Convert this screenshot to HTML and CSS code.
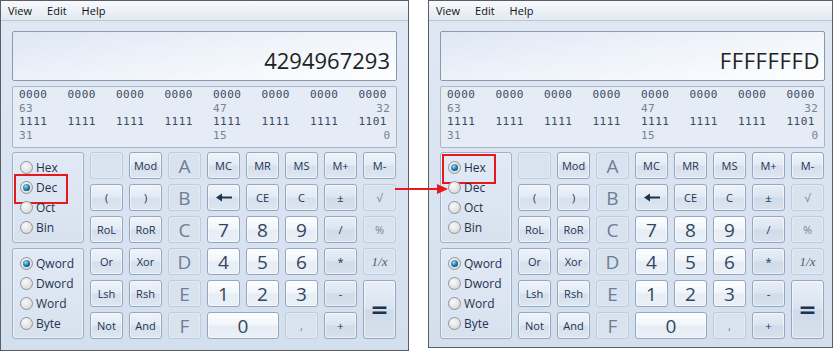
FILE: index.html
```html
<!DOCTYPE html>
<html lang="en">
<head>
  <meta charset="UTF-8" />
  <title>Calculator - Programmer mode</title>
  <link rel="stylesheet" href="styles.css">
</head>
<body>
  <div class="page">

    <!-- left: decimal mode -->
    <div class="calc">
      <div class="menubar"><span>View</span><span>Edit</span><span>Help</span></div>
      <div class="body">
        <div class="display">4294967293</div>
        <div class="bits">
          <div class="row nib"><span>0000</span><span>0000</span><span>0000</span><span>0000</span><span>0000</span><span>0000</span><span>0000</span><span>0000</span></div>
          <div class="row pos"><span>63</span><span class="c5">47</span><span class="c8">32</span></div>
          <div class="row nib"><span>1111</span><span>1111</span><span>1111</span><span>1111</span><span>1111</span><span>1111</span><span>1111</span><span>1101</span></div>
          <div class="row pos"><span>31</span><span class="c5">15</span><span class="c8">0</span></div>
        </div>
        <div class="keypad">
          <div class="group base">
            <div class="radio"><i></i>Hex</div>
            <div class="radio on marked"><i></i>Dec</div>
            <div class="radio"><i></i>Oct</div>
            <div class="radio"><i></i>Bin</div>
          </div>
          <div class="group size">
            <div class="radio on"><i></i>Qword</div>
            <div class="radio"><i></i>Dword</div>
            <div class="radio"><i></i>Word</div>
            <div class="radio"><i></i>Byte</div>
          </div>

          <div class="key off"></div>
          <div class="key">Mod</div>
          <div class="key off big">A</div>
          <div class="key">MC</div>
          <div class="key">MR</div>
          <div class="key">MS</div>
          <div class="key">M+</div>
          <div class="key">M-</div>

          <div class="key">(</div>
          <div class="key">)</div>
          <div class="key off big">B</div>
          <div class="key"><svg width="16" height="9" viewBox="0 0 16 9"><path d="M0 4.5 L6 0.5 V3.5 H16 V5.5 H6 V8.5 Z" fill="#1e3350"/></svg></div>
          <div class="key">CE</div>
          <div class="key">C</div>
          <div class="key op">±</div>
          <div class="key off">√</div>

          <div class="key">RoL</div>
          <div class="key">RoR</div>
          <div class="key off big">C</div>
          <div class="key num">7</div>
          <div class="key num">8</div>
          <div class="key num">9</div>
          <div class="key op">/</div>
          <div class="key off">%</div>

          <div class="key">Or</div>
          <div class="key">Xor</div>
          <div class="key off big">D</div>
          <div class="key num">4</div>
          <div class="key num">5</div>
          <div class="key num">6</div>
          <div class="key op">*</div>
          <div class="key off inv">1/x</div>

          <div class="key">Lsh</div>
          <div class="key">Rsh</div>
          <div class="key off big">E</div>
          <div class="key num">1</div>
          <div class="key num">2</div>
          <div class="key num">3</div>
          <div class="key op">-</div>
          <div class="key op eq">=</div>

          <div class="key">Not</div>
          <div class="key">And</div>
          <div class="key off big">F</div>
          <div class="key num zero">0</div>
          <div class="key off">,</div>
          <div class="key op">+</div>
        </div>
      </div>
    </div>

    <div class="arrow">
      <svg width="54" height="12" viewBox="0 0 54 12"><path d="M0 6 H44" stroke="#e8191b" stroke-width="2"/><path d="M42 1 L53 6 L42 11 Z" fill="#e8191b"/></svg>
    </div>

    <!-- right: hex mode -->
    <div class="calc crop">
      <div class="menubar"><span>View</span><span>Edit</span><span>Help</span></div>
      <div class="body">
        <div class="display hex">FFFFFFFD</div>
        <div class="bits">
          <div class="row nib"><span>0000</span><span>0000</span><span>0000</span><span>0000</span><span>0000</span><span>0000</span><span>0000</span><span>0000</span></div>
          <div class="row pos"><span>63</span><span class="c5">47</span><span class="c8">32</span></div>
          <div class="row nib"><span>1111</span><span>1111</span><span>1111</span><span>1111</span><span>1111</span><span>1111</span><span>1111</span><span>1101</span></div>
          <div class="row pos"><span>31</span><span class="c5">15</span><span class="c8">0</span></div>
        </div>
        <div class="keypad">
          <div class="group base">
            <div class="radio on marked"><i></i>Hex</div>
            <div class="radio"><i></i>Dec</div>
            <div class="radio"><i></i>Oct</div>
            <div class="radio"><i></i>Bin</div>
          </div>
          <div class="group size">
            <div class="radio on"><i></i>Qword</div>
            <div class="radio"><i></i>Dword</div>
            <div class="radio"><i></i>Word</div>
            <div class="radio"><i></i>Byte</div>
          </div>

          <div class="key off"></div>
          <div class="key">Mod</div>
          <div class="key off big">A</div>
          <div class="key">MC</div>
          <div class="key">MR</div>
          <div class="key">MS</div>
          <div class="key">M+</div>
          <div class="key">M-</div>

          <div class="key">(</div>
          <div class="key">)</div>
          <div class="key off big">B</div>
          <div class="key"><svg width="16" height="9" viewBox="0 0 16 9"><path d="M0 4.5 L6 0.5 V3.5 H16 V5.5 H6 V8.5 Z" fill="#1e3350"/></svg></div>
          <div class="key">CE</div>
          <div class="key">C</div>
          <div class="key op">±</div>
          <div class="key off">√</div>

          <div class="key">RoL</div>
          <div class="key">RoR</div>
          <div class="key off big">C</div>
          <div class="key num">7</div>
          <div class="key num">8</div>
          <div class="key num">9</div>
          <div class="key op">/</div>
          <div class="key off">%</div>

          <div class="key">Or</div>
          <div class="key">Xor</div>
          <div class="key off big">D</div>
          <div class="key num">4</div>
          <div class="key num">5</div>
          <div class="key num">6</div>
          <div class="key op">*</div>
          <div class="key off inv">1/x</div>

          <div class="key">Lsh</div>
          <div class="key">Rsh</div>
          <div class="key off big">E</div>
          <div class="key num">1</div>
          <div class="key num">2</div>
          <div class="key num">3</div>
          <div class="key op">-</div>
          <div class="key op eq">=</div>

          <div class="key">Not</div>
          <div class="key">And</div>
          <div class="key off big">F</div>
          <div class="key num zero">0</div>
          <div class="key off">,</div>
          <div class="key op">+</div>
        </div>
      </div>
    </div>

  </div>
</body>
</html>
```

FILE: styles.css
```css
/* Base */
* { box-sizing: border-box; margin: 0; padding: 0; }
body { background: #fff; font-family: 'Open Sans', sans-serif; color: #1e3350; }
.page { position: relative; display: flex; gap: 19px; width: 838px; height: 352px; }

/* Window */
.calc { width: 409px; height: 351px; border: 1px solid #5a5e64; background: linear-gradient(#e0e8f4, #d4dfee); display: flex; flex-direction: column; }
.calc.crop { width: 405px; height: 348px; }
.calc.crop .body { padding-right: 7px; }
.menubar { height: 20px; border-bottom: 1px solid #bcc6d3; background: linear-gradient(#f7f9fc, #e3e9f2); display: flex; gap: 15px; padding-left: 7px; font-size: 11px; line-height: 19px; color: #111; }
.body { padding: 10px 11px 0; display: flex; flex-direction: column; }

/* Display */
.display { height: 50px; border: 1px solid #8d99a8; border-radius: 2px; background: linear-gradient(170deg, #dfe7f4 0%, #eef3fa 45%, #fdfeff 100%); text-align: right; font-size: 22px; line-height: 30px; padding: 13px 6px 0 0; color: #222; }
.display.hex { letter-spacing: 0.6px; padding-right: 4px; }

/* Binary panel */
.bits { height: 62px; margin-top: 5px; border: 1px solid #a9b6c7; border-radius: 2px; background: #e5ecf5; padding: 1px 0 0 6px; font-family: 'DejaVu Sans Mono', monospace; font-size: 11px; letter-spacing: 0.5px; line-height: 13.6px; }
.row { display: grid; grid-template-columns: repeat(7, 48.5px) 32px; }
.nib { color: #3b4b63; }
.pos { color: #76838f; }
.pos .c5 { grid-column: 5; }
.pos .c8 { grid-column: 8; justify-self: end; }

/* Keypad */
.keypad { margin-top: 4px; display: grid; grid-template-columns: 72px repeat(8, 33px); grid-template-rows: repeat(6, 27px); column-gap: 6px; row-gap: 5px; }
.group { grid-column: 1; border: 1px solid #9fb0c5; border-radius: 3px; background: linear-gradient(#e1e9f5, #d8e2ef); box-shadow: inset 0 0 0 1px rgba(255,255,255,.45); padding: 4px 0 0 6px; }
.group.base { grid-row: 1 / span 3; }
.group.size { grid-row: 4 / span 3; }
.radio { position: relative; display: flex; align-items: center; gap: 3px; height: 20px; font-size: 12px; color: #1e3350; }
.radio i { width: 13px; height: 13px; margin-left: 1px; border-radius: 50%; border: 1px solid #8e949c; background: radial-gradient(circle at 40% 35%, #fbfbfb, #dcdcdc 70%, #c9c9c9); display: flex; align-items: center; justify-content: center; }
.radio.on i::before { content: ""; width: 7px; height: 7px; border-radius: 50%; background: radial-gradient(circle at 40% 35%, #8fe0fa, #2a86b2 45%, #0d3a5a 85%); }
.radio.marked::after { content: ""; position: absolute; left: -5px; top: -3px; width: 50px; height: 26px; border: 2px solid #e5191c; }

/* Keys */
.key { display: flex; align-items: center; justify-content: center; border: 1px solid #94a7c0; border-radius: 3px; background: linear-gradient(#eef3f9 0%, #e3eaf4 48%, #d6e0ed 52%, #dde6f1 100%); box-shadow: inset 0 0 0 1px rgba(255,255,255,.55); font-size: 11px; color: #1e3350; }
.key.num { background: linear-gradient(#fdfeff 0%, #f1f5fa 48%, #e6edf5 52%, #eaf0f7 100%); font-size: 19px; color: #33465f; }
.key.op { background: linear-gradient(#e9eff7 0%, #dbe4ef 48%, #cfdbe9 52%, #d7e1ed 100%); }
.key.off { border-color: #bfccdc; background: #d9e3ef; box-shadow: inset 0 0 0 1px rgba(255,255,255,.25); color: #6f8196; }
.key.big { font-size: 19px; color: #6c7e94; }
.key.inv { font-family: 'Liberation Serif', serif; font-style: italic; font-size: 13px; color: #4d5f76; }
.key.eq { grid-row: span 2; font-family: 'DejaVu Sans', sans-serif; font-weight: bold; font-size: 22px; }
.key.zero { grid-column: span 2; }

/* Annotation arrow */
.arrow { position: absolute; left: 395px; top: 183px; line-height: 0; }
```
